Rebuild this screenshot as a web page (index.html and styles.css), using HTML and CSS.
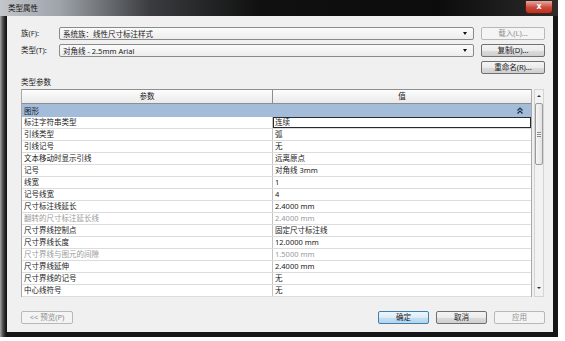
FILE: index.html
```html
<!DOCTYPE html>
<html lang="zh-CN">

<head>
  <meta charset="UTF-8">
  <title>类型属性</title>
  <link rel="stylesheet" href="styles.css">
</head>

<body>
  <div class="window">
    <div class="titlebar">
      <span class="title">类型属性</span>
      <span class="close">x</span>
    </div>

    <div class="dialog">
      <div class="type-rows">
        <label>族(F):</label>
        <div class="combo"><span>系统族：线性尺寸标注样式</span><i class="arrow"></i></div>
        <button class="btn disabled">载入(L)...</button>

        <label>类型(T):</label>
        <div class="combo"><span>对角线 - 2.5mm Arial</span><i class="arrow"></i></div>
        <button class="btn">复制(D)...</button>

        <span></span>
        <span></span>
        <button class="btn">重命名(R)...</button>
      </div>

      <div class="section-label">类型参数</div>

      <div class="table-wrap">
        <div class="params">
          <div class="head">
            <div>参数</div>
            <div>值</div>
          </div>
          <div class="group">
            <span>图形</span>
            <svg width="6" height="7" viewBox="0 0 6 7">
              <path d="M0.5 3.5 L3 1 L5.5 3.5 M0.5 6.5 L3 4 L5.5 6.5" fill="none" stroke="#1d2a44" stroke-width="1.2" />
            </svg>
          </div>
          <div class="row"><div>标注字符串类型</div><div class="selected">连续</div></div>
          <div class="row"><div>引线类型</div><div>弧</div></div>
          <div class="row"><div>引线记号</div><div>无</div></div>
          <div class="row"><div>文本移动时显示引线</div><div>远离原点</div></div>
          <div class="row"><div>记号</div><div>对角线 3mm</div></div>
          <div class="row"><div>线宽</div><div>1</div></div>
          <div class="row"><div>记号线宽</div><div>4</div></div>
          <div class="row"><div>尺寸标注线延长</div><div>2.4000 mm</div></div>
          <div class="row muted"><div>翻转的尺寸标注延长线</div><div>2.4000 mm</div></div>
          <div class="row"><div>尺寸界线控制点</div><div>固定尺寸标注线</div></div>
          <div class="row"><div>尺寸界线长度</div><div>12.0000 mm</div></div>
          <div class="row muted"><div>尺寸界线与图元的间隙</div><div>1.5000 mm</div></div>
          <div class="row"><div>尺寸界线延伸</div><div>2.4000 mm</div></div>
          <div class="row"><div>尺寸界线的记号</div><div>无</div></div>
          <div class="row"><div>中心线符号</div><div>无</div></div>
        </div>

        <div class="scrollbar">
          <div class="sb-arrow up"></div>
          <div class="thumb"><i></i></div>
          <div class="sb-arrow down"></div>
        </div>
      </div>

      <div class="footer">
        <button class="btn disabled preview">&lt;&lt; 预览(P)</button>
        <div class="actions">
          <button class="btn default">确定</button>
          <button class="btn">取消</button>
          <button class="btn disabled">应用</button>
        </div>
      </div>
    </div>
  </div>
</body>

</html>
```

FILE: styles.css
```css
* {
  padding: 0;
  margin: 0;
  box-sizing: border-box;
}

body {
  background-color: #ffffff;
  font-family: "Noto Sans", "Noto Sans CJK SC", sans-serif;
  font-size: 7.5px;
  color: #1a1a1a;
}

/* window frame */
.window {
  width: 558px;
  height: 337px;
  display: flex;
  flex-direction: column;
  padding: 0 5px 5px 7px;
  background: linear-gradient(to right, #a4a8ad 0, #4a4a4a 3px, #161616 6px, #161616 100%);
}

.titlebar {
  height: 16px;
  margin: 0 -5px 0 -7px;
  display: flex;
  align-items: flex-start;
  justify-content: space-between;
  background: linear-gradient(to right, #c3c7cc 0, #9ea3a9 60px, #3a3c3f 150px, #101010 260px, #0c0c0c 440px, #2c2c2c 100%);
}

.titlebar .title {
  margin: 4px 0 0 8px;
  line-height: 9px;
  color: #111;
}

.titlebar .close {
  width: 28px;
  height: 13px;
  margin: 1px 5px 0 0;
  border: 1px solid #5b1a12;
  border-top: none;
  border-radius: 0 0 4px 4px;
  background: linear-gradient(#e6a89e, #c9493a 55%, #b8321f);
  color: #ffffff;
  font-family: "DejaVu Sans", sans-serif;
  font-weight: 700;
  font-size: 8px;
  line-height: 11px;
  text-align: center;
}

.dialog {
  flex: 1;
  display: flex;
  flex-direction: column;
  padding: 11px 8px 0 14px;
  background-color: #f0f0f0;
}

/* family / type selectors */
.type-rows {
  display: grid;
  grid-template-columns: 38px 422px 64px;
  grid-auto-rows: 13px;
  row-gap: 4px;
}

.type-rows label {
  line-height: 13px;
}

.combo {
  width: 415px;
  display: flex;
  align-items: center;
  justify-content: space-between;
  padding: 0 6px 0 3px;
  border: 1px solid #8a8a8a;
  border-radius: 2px;
  background: linear-gradient(#fbfbfb, #ededed);
}

.combo .arrow {
  width: 0;
  height: 0;
  border-left: 2.5px solid transparent;
  border-right: 2.5px solid transparent;
  border-top: 3px solid #111;
}

.btn {
  height: 13px;
  font-family: inherit;
  font-size: 7.5px;
  line-height: 11px;
  color: #1a1a1a;
  border: 1px solid #707070;
  border-radius: 2px;
  background: linear-gradient(#f4f4f4, #ebebeb 50%, #dcdcdc 51%, #cfcfcf);
}

.btn.disabled {
  color: #8f8f8f;
  border-color: #b6b9bc;
  background: #f4f4f4;
}

.btn.default {
  border-color: #3c7fb1;
  background: linear-gradient(#eef6fb, #dcecf7 50%, #c6e0f2 51%, #b4d4ec);
}

.section-label {
  margin: 3px 0 2px;
  line-height: 10px;
}

/* parameter grid */
.table-wrap {
  display: flex;
  gap: 2px;
}

.params {
  width: 511px;
  height: 208px;
  border-left: 1px solid #a9a9a9;
  border-right: 1px solid #a9a9a9;
  background-color: #ffffff;
}

.head {
  height: 15px;
  display: grid;
  grid-template-columns: 250px 1fr;
  border: 1px solid #8e8e8e;
  border-left: none;
  border-right: none;
  background: linear-gradient(#fdfdfd, #eaeaea);
  text-align: center;
  line-height: 13px;
}

.head div + div {
  border-left: 1px solid #8e8e8e;
}

.group {
  height: 13px;
  display: flex;
  align-items: center;
  justify-content: space-between;
  padding: 0 8px 0 2px;
  background-color: #a3bcd9;
  color: #101828;
}

.row {
  height: 12px;
  display: grid;
  grid-template-columns: 250px 1fr;
  border-bottom: 1px solid #dcdcdc;
  line-height: 11px;
}

.row div {
  padding-left: 2px;
  white-space: nowrap;
}

.row div + div {
  border-left: 1px solid #c4c4c4;
}

.row .selected {
  box-shadow: inset 0 0 0 1px #2a2a2a;
}

.row.muted {
  color: #9a9a9a;
}

/* scrollbar */
.scrollbar {
  width: 10px;
  height: 208px;
  display: flex;
  flex-direction: column;
  border: 1px solid #d4d4d4;
  background-color: #f2f2f2;
}

.sb-arrow {
  height: 11px;
  display: flex;
  align-items: center;
  justify-content: center;
}

.sb-arrow::after {
  content: "";
  border-left: 2px solid transparent;
  border-right: 2px solid transparent;
}

.sb-arrow.up::after {
  border-bottom: 2px solid #333;
}

.sb-arrow.down {
  margin-top: auto;
  margin-bottom: 3px;
}

.sb-arrow.down::after {
  border-top: 2px solid #333;
}

.thumb {
  height: 62px;
  margin: 2px 0 0;
  display: flex;
  align-items: center;
  justify-content: center;
  border: 1px solid #9b9b9b;
  border-radius: 2px;
  background: linear-gradient(to right, #f6f6f6, #e2e2e2);
}

.thumb i {
  width: 4px;
  height: 5px;
  border-top: 1px solid #888;
  border-bottom: 1px solid #888;
  background: linear-gradient(#f6f6f6 40%, #888 40%, #888 60%, #f6f6f6 60%);
}

/* bottom buttons */
.footer {
  margin-top: 14px;
  display: flex;
  justify-content: space-between;
}

.footer .preview {
  width: 52px;
}

.actions {
  display: flex;
  gap: 7px;
}

.actions .btn {
  width: 51px;
}
```
